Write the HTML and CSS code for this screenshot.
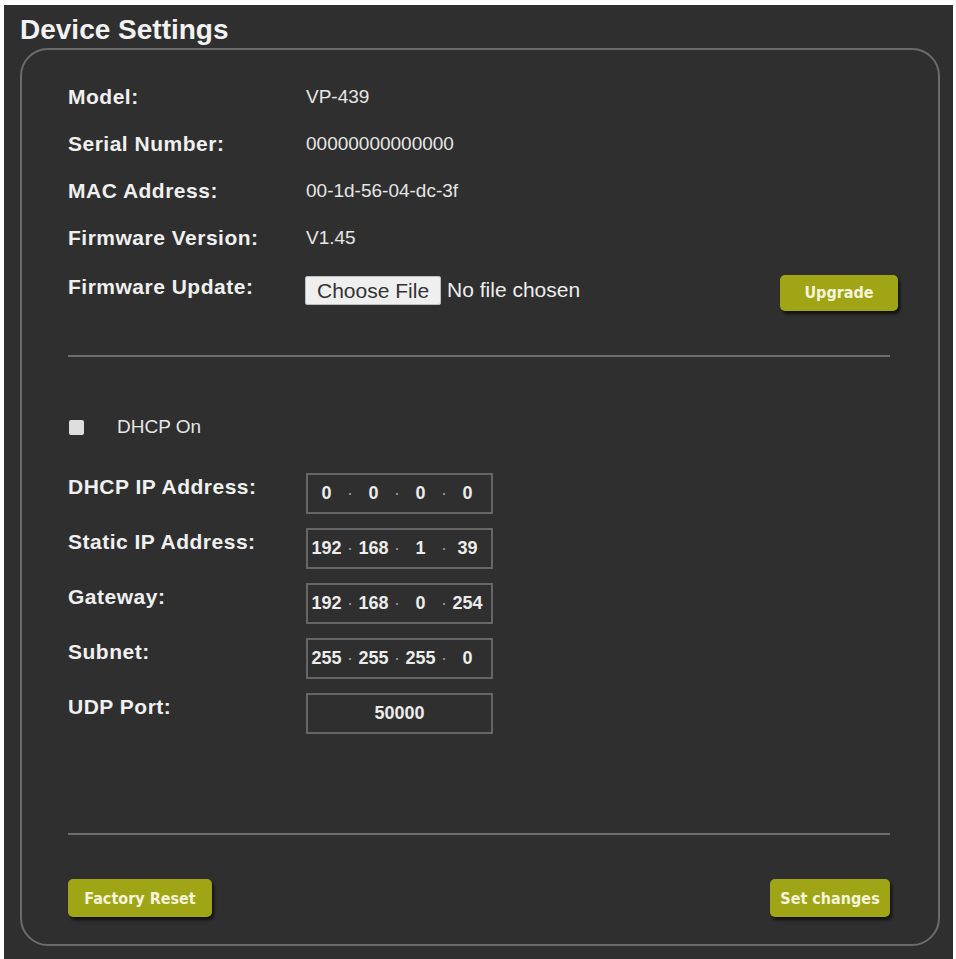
FILE: index.html
```html
<!DOCTYPE html>
<html lang="en">
<head>
    <meta charset="UTF-8">
    <meta name="viewport" content="width=device-width, initial-scale=1.0">
    <title>Device Settings</title>
    <link rel="stylesheet" href="styles.css">
</head>
<body>
    <div class="panel">
        <h1 class="title">Device Settings</h1>
        <div class="card">
            <div class="info">
                <div class="info-row">
                    <span class="label">Model:</span>
                    <span class="value">VP-439</span>
                </div>
                <div class="info-row">
                    <span class="label">Serial Number:</span>
                    <span class="value">00000000000000</span>
                </div>
                <div class="info-row">
                    <span class="label">MAC Address:</span>
                    <span class="value">00-1d-56-04-dc-3f</span>
                </div>
                <div class="info-row">
                    <span class="label">Firmware Version:</span>
                    <span class="value">V1.45</span>
                </div>
                <div class="info-row">
                    <span class="label">Firmware Update:</span>
                    <span class="file-btn">Choose File</span>
                    <span class="file-name">No file chosen</span>
                    <button class="btn btn-upgrade">Upgrade</button>
                </div>
            </div>

            <hr class="divider">

            <div class="network">
                <label class="dhcp">
                    <span class="checkbox"></span>
                    <span>DHCP On</span>
                </label>

                <div class="ip-row">
                    <span class="label">DHCP IP Address:</span>
                    <div class="ip-box">
                        <span class="octet">0</span><span class="dot">·</span>
                        <span class="octet">0</span><span class="dot">·</span>
                        <span class="octet">0</span><span class="dot">·</span>
                        <span class="octet">0</span>
                    </div>
                </div>
                <div class="ip-row">
                    <span class="label">Static IP Address:</span>
                    <div class="ip-box">
                        <span class="octet">192</span><span class="dot">·</span>
                        <span class="octet">168</span><span class="dot">·</span>
                        <span class="octet">1</span><span class="dot">·</span>
                        <span class="octet">39</span>
                    </div>
                </div>
                <div class="ip-row">
                    <span class="label">Gateway:</span>
                    <div class="ip-box">
                        <span class="octet">192</span><span class="dot">·</span>
                        <span class="octet">168</span><span class="dot">·</span>
                        <span class="octet">0</span><span class="dot">·</span>
                        <span class="octet">254</span>
                    </div>
                </div>
                <div class="ip-row">
                    <span class="label">Subnet:</span>
                    <div class="ip-box">
                        <span class="octet">255</span><span class="dot">·</span>
                        <span class="octet">255</span><span class="dot">·</span>
                        <span class="octet">255</span><span class="dot">·</span>
                        <span class="octet">0</span>
                    </div>
                </div>
                <div class="ip-row">
                    <span class="label">UDP Port:</span>
                    <div class="ip-box port">50000</div>
                </div>
            </div>

            <hr class="divider divider-bottom">

            <div class="actions">
                <button class="btn btn-reset">Factory Reset</button>
                <button class="btn btn-set">Set changes</button>
            </div>
        </div>
    </div>
</body>
</html>
```

FILE: styles.css
```css
body {
    margin: 0;
    background-color: #ffffff;
    font-family: "Liberation Sans", Arial, sans-serif;
}

.panel {
    margin: 5px 3px 0 4px;
    height: 954px;
    background-color: #2f2f2f;
    color: #ececec;
    overflow: hidden;
}

.title {
    margin: 0;
    padding: 9px 0 0 16px;
    font-size: 28px;
    line-height: 32px;
    font-weight: bold;
    color: #f2f2f2;
}

.card {
    margin: 2px 13px 0 16px;
    height: 894px;
    border: 2px solid #6b6b6b;
    border-radius: 28px;
    padding: 0 48px 0 46px;
}

/* device info */
.info {
    padding-top: 23px;
}

.info-row {
    display: flex;
    align-items: center;
    height: 47px;
}

.label {
    width: 238px;
    flex-shrink: 0;
    font-size: 21px;
    font-weight: bold;
    letter-spacing: 0.5px;
    color: #f0f0f0;
}

.value {
    font-size: 19px;
    color: #e6e6e6;
}

.info-row:last-child {
    height: 50px;
    margin-top: 4px;
}

.info-row:last-child .label {
    margin-top: -6px;
}

.file-btn {
    display: inline-block;
    height: 27px;
    line-height: 27px;
    padding: 0 11px;
    margin-left: -1px;
    background-color: #efefef;
    border: 1px solid #bdbdbd;
    border-radius: 2px;
    color: #333;
    font-size: 21px;
}

.file-name {
    margin-left: 6px;
    font-size: 21px;
    color: #eeeeee;
}

.btn {
    height: 37px;
    border: none;
    border-radius: 5px;
    background-color: #a0a516;
    color: #f4f4dc;
    font-family: "DejaVu Sans Condensed", "DejaVu Sans", sans-serif;
    font-stretch: condensed;
    font-size: 16px;
    font-weight: bold;
    box-shadow: 2px 3px 3px #121212;
    cursor: pointer;
}

.btn-upgrade {
    width: 118px;
    height: 36px;
    margin-left: auto;
    margin-right: -8px;
    margin-top: 5px;
}

.divider {
    margin: 40px 0 0;
    border: none;
    height: 2px;
    background-color: #6e6e6e;
}

/* network settings */
.network {
    padding-top: 55px;
}

.dhcp {
    display: flex;
    align-items: center;
    height: 30px;
    font-size: 19px;
    color: #e6e6e6;
}

.checkbox {
    width: 15px;
    height: 15px;
    margin: 0 33px 0 1px;
    background-color: #dedede;
    border-radius: 2px;
}

.ip-row {
    display: flex;
    align-items: flex-start;
    margin-top: 14px;
}

.dhcp + .ip-row {
    margin-top: 31px;
}

.ip-row .label {
    line-height: 27px;
}

.ip-box {
    display: flex;
    align-items: center;
    width: 183px;
    height: 37px;
    border: 2px solid #666666;
    font-size: 18px;
    font-weight: bold;
    color: #ececec;
}

.octet {
    width: 37px;
    text-align: center;
}

.dot {
    width: 10px;
    text-align: center;
    color: #9a9a9a;
    font-weight: normal;
}

.port {
    justify-content: center;
}

.divider-bottom {
    margin-top: 99px;
}

.actions {
    display: flex;
    justify-content: space-between;
    margin-top: 44px;
}

.btn-reset {
    width: 144px;
    height: 38px;
}

.btn-set {
    width: 120px;
    height: 38px;
}
```
